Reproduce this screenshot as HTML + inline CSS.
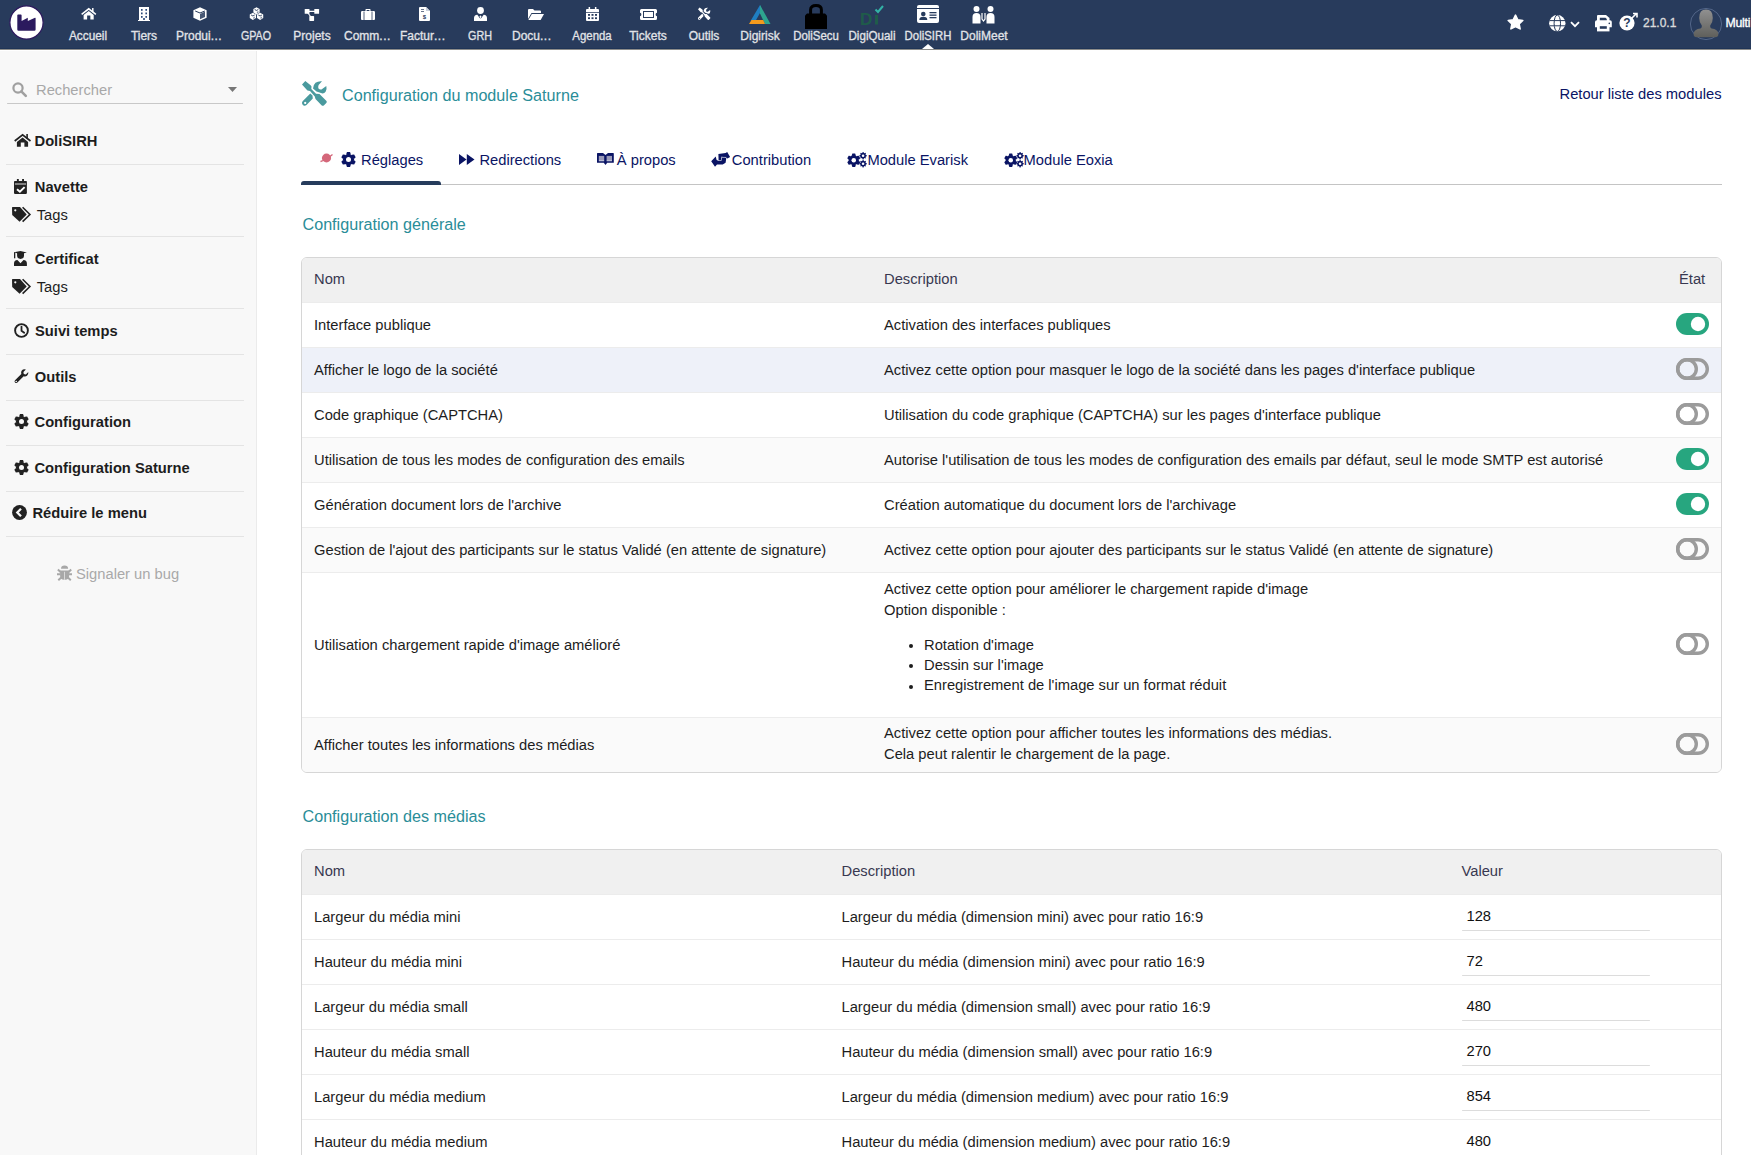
<!DOCTYPE html><html><head><meta charset="utf-8"><title>Configuration du module Saturne</title>
<style>
html,body{margin:0;padding:0}
body{width:1751px;height:1155px;overflow:hidden;position:relative;background:#fff;font-family:"Liberation Sans",sans-serif;}
.a{position:absolute;white-space:nowrap;line-height:1}
svg.a{overflow:visible}
</style></head><body>
<div class="a" style="left:0px;top:0px;width:1751px;height:48px;background:#283b5c;"></div>
<div class="a" style="left:0px;top:48px;width:1751px;height:1px;background:#1f3456;"></div>
<div class="a" style="left:0px;top:49px;width:1751px;height:1px;background:#8c8c8a;"></div>
<svg class="a" style="left:9px;top:5px;" width="35" height="35" viewBox="0 0 35 35"><circle cx="17.5" cy="17.5" r="16.6" fill="#fff" stroke="#2e1a5e" stroke-width="1.2"/><path d="M8.3 10.3 Q8.3 9.5 9.1 9.5 H11.8 Q12.6 9.5 12.6 10.3 V15.9 L18.8 12.8 V15.9 L26 12.8 Q26.6 12.6 26.6 13.3 V24.5 Q26.6 25.7 25.4 25.7 H9.5 Q8.3 25.7 8.3 24.5 Z" fill="#2b1a5e"/></svg>
<div class="a" style="left:60px;width:56px;text-align:center;top:29.74px;font-size:12px;color:#e2e4e8;-webkit-text-stroke:0.3px #e2e4e8;transform:scaleX(0.987)">Accueil</div>
<div class="a" style="left:116px;width:56px;text-align:center;top:29.74px;font-size:12px;color:#e2e4e8;-webkit-text-stroke:0.3px #e2e4e8;transform:scaleX(1)">Tiers</div>
<div class="a" style="left:176px;top:29.74px;font-size:12px;color:#e2e4e8;-webkit-text-stroke:0.3px #e2e4e8;">Produi<span style="letter-spacing:0.5px">...</span></div>
<div class="a" style="left:228px;width:56px;text-align:center;top:29.74px;font-size:12px;color:#e2e4e8;-webkit-text-stroke:0.3px #e2e4e8;transform:scaleX(0.89)">GPAO</div>
<div class="a" style="left:284px;width:56px;text-align:center;top:29.74px;font-size:12px;color:#e2e4e8;-webkit-text-stroke:0.3px #e2e4e8;transform:scaleX(1)">Projets</div>
<div class="a" style="left:344px;top:29.74px;font-size:12px;color:#e2e4e8;-webkit-text-stroke:0.3px #e2e4e8;">Comm<span style="letter-spacing:0.5px">...</span></div>
<div class="a" style="left:400px;top:29.74px;font-size:12px;color:#e2e4e8;-webkit-text-stroke:0.3px #e2e4e8;">Factur<span style="letter-spacing:0.5px">...</span></div>
<div class="a" style="left:452px;width:56px;text-align:center;top:29.74px;font-size:12px;color:#e2e4e8;-webkit-text-stroke:0.3px #e2e4e8;transform:scaleX(0.9)">GRH</div>
<div class="a" style="left:512px;top:29.74px;font-size:12px;color:#e2e4e8;-webkit-text-stroke:0.3px #e2e4e8;">Docu<span style="letter-spacing:0.5px">...</span></div>
<div class="a" style="left:564px;width:56px;text-align:center;top:29.74px;font-size:12px;color:#e2e4e8;-webkit-text-stroke:0.3px #e2e4e8;transform:scaleX(0.952)">Agenda</div>
<div class="a" style="left:620px;width:56px;text-align:center;top:29.74px;font-size:12px;color:#e2e4e8;-webkit-text-stroke:0.3px #e2e4e8;transform:scaleX(1)">Tickets</div>
<div class="a" style="left:676px;width:56px;text-align:center;top:29.74px;font-size:12px;color:#e2e4e8;-webkit-text-stroke:0.3px #e2e4e8;transform:scaleX(1)">Outils</div>
<div class="a" style="left:732px;width:56px;text-align:center;top:29.74px;font-size:12px;color:#e2e4e8;-webkit-text-stroke:0.3px #e2e4e8;transform:scaleX(1)">Digirisk</div>
<div class="a" style="left:788px;width:56px;text-align:center;top:29.74px;font-size:12px;color:#e2e4e8;-webkit-text-stroke:0.3px #e2e4e8;transform:scaleX(0.95)">DoliSecu</div>
<div class="a" style="left:844px;width:56px;text-align:center;top:29.74px;font-size:12px;color:#e2e4e8;-webkit-text-stroke:0.3px #e2e4e8;transform:scaleX(0.965)">DigiQuali</div>
<div class="a" style="left:900px;width:56px;text-align:center;top:29.74px;font-size:12px;color:#e2e4e8;-webkit-text-stroke:0.3px #e2e4e8;transform:scaleX(0.948)">DoliSIRH</div>
<div class="a" style="left:956px;width:56px;text-align:center;top:29.74px;font-size:12px;color:#e2e4e8;-webkit-text-stroke:0.3px #e2e4e8;transform:scaleX(1)">DoliMeet</div>
<svg class="a" style="left:80.5px;top:7.5px;" width="16" height="13" viewBox="0 0 16 13"><g transform="scale(0.9)"><path d="M0.7 7 L8.6 0.9 L16.5 7" fill="none" stroke="#fff" stroke-width="1.7" stroke-linejoin="miter"/><rect x="12.3" y="0" width="1.6" height="4.6" fill="#fff"/><path d="M2.9 7.9 L8.6 3.4 L14.1 7.9 V12.7 H10.4 V8.4 H6.8 V12.7 H2.9 Z" fill="#fff"/></g></svg>
<svg class="a" style="left:138px;top:7px;" width="12" height="14" viewBox="0 0 12 14"><path d="M1 0 H11 V13 H12 V14 H0 V13 H1 Z" fill="#fff"/><g fill="#2b4a7a"><rect x="3" y="2" width="1.6" height="1.8"/><rect x="7.4" y="2" width="1.6" height="1.8"/><rect x="3" y="5.5" width="1.6" height="1.8"/><rect x="7.4" y="5.5" width="1.6" height="1.8"/><rect x="3" y="9" width="1.6" height="1.8"/><rect x="7.4" y="9" width="1.6" height="1.8"/><rect x="5.2" y="11" width="1.6" height="2"/></g></svg>
<svg class="a" style="left:193px;top:7px;" width="14" height="14" viewBox="0 0 14 14"><path d="M7 0.3 L13.6 3.2 V10.8 L7 13.7 L0.4 10.8 V3.2 Z" fill="#fff"/><path d="M7 7 L12 4.6 V10 L7 12.2 Z" fill="#283b5c" opacity="0.85"/><path d="M2.2 4 L7 6 L11.8 4" stroke="#283b5c" stroke-width="1" fill="none"/></svg>
<svg class="a" style="left:249px;top:6.5px;" width="15" height="14" viewBox="0 0 15 14"><path d="M7.50 0.20 L10.63 2.00 L10.63 5.60 L7.50 7.40 L4.37 5.60 L4.37 2.00 Z" fill="#fff"/><path d="M5.70 2.54 L7.50 3.44 L9.30 2.54" fill="none" stroke="#283b5c" stroke-width="0.9"/><path d="M7.86 4.70 L9.48 3.98 V5.78 L7.86 6.50 Z" fill="#283b5c" opacity="0.55"/><path d="M3.90 5.70 L7.03 7.50 L7.03 11.10 L3.90 12.90 L0.77 11.10 L0.77 7.50 Z" fill="#fff"/><path d="M2.10 8.04 L3.90 8.94 L5.70 8.04" fill="none" stroke="#283b5c" stroke-width="0.9"/><path d="M4.26 10.20 L5.88 9.48 V11.28 L4.26 12.00 Z" fill="#283b5c" opacity="0.55"/><path d="M11.10 5.70 L14.23 7.50 L14.23 11.10 L11.10 12.90 L7.97 11.10 L7.97 7.50 Z" fill="#fff"/><path d="M9.30 8.04 L11.10 8.94 L12.90 8.04" fill="none" stroke="#283b5c" stroke-width="0.9"/><path d="M11.46 10.20 L13.08 9.48 V11.28 L11.46 12.00 Z" fill="#283b5c" opacity="0.55"/></svg>
<svg class="a" style="left:304px;top:8px;" width="15" height="13" viewBox="0 0 15 13"><g fill="#fff"><rect x="0.7" y="1" width="4.8" height="4.8" rx="0.6"/><rect x="10.3" y="1" width="4.8" height="4.8" rx="0.6"/><rect x="5.3" y="8.1" width="4.8" height="4.8" rx="0.6"/></g><path d="M4 3.4 H11 M3.5 4.5 L7 9" stroke="#fff" stroke-width="1.1"/></svg>
<svg class="a" style="left:361px;top:9px;" width="14" height="11" viewBox="0 0 14 11"><path d="M4.5 2 V0.6 Q4.5 0 5.1 0 H8.9 Q9.5 0 9.5 0.6 V2 H12.8 Q14 2 14 3.2 V10 Q14 11 13 11 H1 Q0 11 0 10 V3.2 Q0 2 1.2 2 Z M5.6 2 H8.4 V1 H5.6 Z" fill="#fff" fill-rule="evenodd"/><path d="M3 2.5 V11 M11 2.5 V11" stroke="#283b5c" stroke-width="0.8"/></svg>
<svg class="a" style="left:419px;top:7px;" width="11" height="14" viewBox="0 0 11 14"><path d="M0 1 Q0 0 1 0 H7 L11 4 V13 Q11 14 10 14 H1 Q0 14 0 13 Z" fill="#fff"/><path d="M7 0 V4 H11" fill="#c8cfdc"/><path d="M2 2.5 H5 M2 4.5 H5" stroke="#283b5c" stroke-width="0.7"/><text x="5.5" y="11.5" font-size="6" text-anchor="middle" fill="#283b5c" font-family="Liberation Sans" font-weight="700">$</text></svg>
<svg class="a" style="left:474px;top:7px;" width="13" height="14" viewBox="0 0 13 14"><circle cx="6.5" cy="3.5" r="3.4" fill="#fff"/><path d="M0 14 V11 Q0 8 3.3 7.8 L6.5 12 L9.7 7.8 Q13 8 13 11 V14 Z" fill="#fff"/><path d="M6.5 8.2 L5.8 9.3 L6.5 13 L7.2 9.3 Z" fill="#fff"/></svg>
<svg class="a" style="left:528px;top:9px;" width="16" height="11" viewBox="0 0 16 11"><path d="M0 1 Q0 0 1 0 H5 L6.5 1.5 H12 Q13 1.5 13 2.5 V4 H3.5 L0 10 Z" fill="#fff"/><path d="M3.8 5 H16 L12.6 11 H0.4 Z" fill="#fff"/></svg>
<svg class="a" style="left:586px;top:7px;" width="13" height="14" viewBox="0 0 13 14"><path d="M0 3 Q0 2 1 2 H12 Q13 2 13 3 V5 H0 Z" fill="#fff"/><rect x="2.6" y="0" width="1.5" height="3" fill="#fff"/><rect x="8.9" y="0" width="1.5" height="3" fill="#fff"/><path d="M0 5.8 H13 V13 Q13 14 12 14 H1 Q0 14 0 13 Z" fill="#fff"/><g fill="#283b5c"><rect x="2" y="7" width="2" height="1.8"/><rect x="5.5" y="7" width="2" height="1.8"/><rect x="9" y="7" width="2" height="1.8"/><rect x="2" y="10.3" width="2" height="1.8"/><rect x="5.5" y="10.3" width="2" height="1.8"/><rect x="9" y="10.3" width="2" height="1.8"/></g></svg>
<svg class="a" style="left:640px;top:9px;" width="17" height="11" viewBox="0 0 17 11"><path d="M1.5 0 H15.5 Q17 0 17 1.5 V3.8 Q15.6 3.8 15.6 5.5 Q15.6 7.2 17 7.2 V9.5 Q17 11 15.5 11 H1.5 Q0 11 0 9.5 V7.2 Q1.4 7.2 1.4 5.5 Q1.4 3.8 0 3.8 V1.5 Q0 0 1.5 0 Z" fill="#fff"/><rect x="3.5" y="2.5" width="10" height="6" fill="none" stroke="#283b5c" stroke-width="1"/></svg>
<svg class="a" style="left:696px;top:5px;" width="17" height="17" viewBox="0 0 17 17"><g transform="scale(0.5)"><path d="M4 8.5 L7.3 5 L12.6 9.2 L13.5 10.5 L13.3 13 L18 17.8 L21.5 18 L28.5 25 Q29.2 26 28.3 27 L25.8 29.5 Q24.6 30.3 23.5 29.3 L17.5 23 L16.8 20.5 L12 15 L9.5 14.5 L8.5 13.5 Z" fill="#fff"/><path d="M12.3 17.5 L14.5 19.5 L14.8 22.5 L8.5 29 Q7 30.2 5.5 29.5 L4.3 28.3 Q3.5 26.8 4.6 25.2 Z M7.2 25.8 A1.1 1.1 0 1 0 7.21 25.8 Z" fill="#fff" fill-rule="evenodd"/><path d="M15 12.5 Q15.5 8.5 17.5 6.8 Q20 5 24 5.3 L20.6 9 Q19.8 11 20.5 12.5 Q21.8 14 23.5 13.4 L28.3 10 Q29.2 13.5 27.6 15.8 Q26.5 17.6 24.5 17.6 L21.5 16.6 L18.5 15.6 Z" fill="#fff"/></g></svg>
<svg class="a" style="left:749px;top:5px;" width="22" height="20" viewBox="0 0 22 20"><path d="M11 0 L1.5 16 H6.5 L11 8 L13 4.5 Z" fill="#1f7ec2"/><path d="M11 0 L21.5 19 H16 L11 8.5 Z" fill="#2ea58f"/><path d="M0 19 L2.5 15 H14.2 L16 19 Z" fill="#f39a1d"/></svg>
<svg class="a" style="left:804px;top:3px;" width="24" height="26" viewBox="0 0 24 26"><path d="M6.6 11.5 V6.8 Q6.6 2.5 12 2.5 Q17.4 2.5 17.4 6.8 V11.5" fill="none" stroke="#000" stroke-width="3"/><path d="M3 10.5 H21 L23 12.5 V26 H1 V12.5 Z" fill="#000"/></svg>
<svg class="a" style="left:860px;top:4px;" width="24" height="22" viewBox="0 0 24 22"><text x="0" y="20.5" font-family="Liberation Sans" font-weight="700" font-size="17" fill="#1f5c4a">D</text><rect x="15" y="11" width="3" height="9.5" fill="#1f5c4a"/><path d="M15.5 5.5 L18 8 L23 2" fill="none" stroke="#33b3a6" stroke-width="2"/></svg>
<svg class="a" style="left:917px;top:5px;" width="22" height="18" viewBox="0 0 22 18"><rect x="0" y="0" width="22" height="18" rx="2" fill="#fff"/><rect x="0" y="3" width="22" height="1" fill="#283b5c"/><circle cx="6.3" cy="9" r="2.3" fill="#283b5c"/><path d="M2.3 15 Q2.3 11.8 6.3 11.8 Q10.3 11.8 10.3 15 Z" fill="#283b5c"/><rect x="12.5" y="7" width="7" height="1.3" fill="#283b5c"/><rect x="12.5" y="9.5" width="7" height="1.3" fill="#283b5c"/><rect x="12.5" y="12" width="7" height="1.3" fill="#283b5c"/></svg>
<svg class="a" style="left:972px;top:6px;" width="23" height="18" viewBox="0 0 23 18"><circle cx="4.5" cy="3" r="3" fill="#fff"/><circle cx="18.5" cy="3" r="3" fill="#fff"/><path d="M0.5 17.5 V11 Q0.5 7 4.5 7 Q8.5 7 8.5 11 V17.5 Z" fill="#fff"/><path d="M14.5 17.5 V11 Q14.5 7 18.5 7 Q22.5 7 22.5 11 V17.5 Z" fill="#fff"/><path d="M10 7 V13 L11.5 15 L13 13 V7" fill="none" stroke="#fff" stroke-width="1.2"/></svg>
<svg class="a" style="left:922px;top:44px;" width="12" height="5" viewBox="0 0 12 5"><path d="M0 5 L6 0 L12 5 Z" fill="#fff"/></svg>
<svg class="a" style="left:1507px;top:14px;" width="17" height="16" viewBox="0 0 17 16"><path d="M8.5 1.2 L10.8 5.9 L15.8 6.5 L12.1 10 L13.1 14.9 L8.5 12.5 L3.9 14.9 L4.9 10 L1.2 6.5 L6.2 5.9 Z" fill="#fff" stroke="#fff" stroke-width="1.6" stroke-linejoin="round"/></svg>
<svg class="a" style="left:1549px;top:14.5px;" width="17" height="17" viewBox="0 0 17 17"><circle cx="8.3" cy="8.3" r="8.2" fill="#fff"/><path d="M0.5 5.6 H16 M0.5 10.8 H16" stroke="#283b5c" stroke-width="1"/><ellipse cx="8.3" cy="8.3" rx="3.2" ry="8.2" fill="none" stroke="#283b5c" stroke-width="1"/></svg>
<svg class="a" style="left:1570px;top:21px;" width="10" height="7" viewBox="0 0 10 7"><path d="M1 1.2 L5 5.2 L9 1.2" fill="none" stroke="#fff" stroke-width="1.8"/></svg>
<svg class="a" style="left:1595px;top:14.8px;" width="17" height="17" viewBox="0 0 17 17"><path d="M2 1 Q2 0 3 0 H11 L14.5 3 V6 H2 Z" fill="#fff"/><path d="M4.8 2.7 H10.5 L11.8 4 V6.5 H4.8 Z" fill="#283b5c"/><path d="M0 7 Q0 5.2 1.8 5.2 H15 Q16.8 5.2 16.8 7 V12.2 H0 Z" fill="#fff"/><circle cx="14.3" cy="8.4" r="0.8" fill="#283b5c"/><path d="M2 9.7 H14.5 V16.4 H2 Z" fill="#fff"/><rect x="4.8" y="11.2" width="7" height="2.6" fill="#283b5c"/></svg>
<svg class="a" style="left:1619px;top:13px;" width="19" height="18" viewBox="0 0 19 18"><circle cx="8" cy="10" r="7.6" fill="#fff"/><text x="8" y="14.3" text-anchor="middle" font-family="Liberation Sans" font-weight="700" font-size="12" fill="#283b5c">?</text><path d="M12.5 5.5 L17.5 0.5 M14 0.5 H18 V4.5" fill="none" stroke="#fff" stroke-width="1.6"/></svg>
<div class="a" style="left:1643.00px;top:17.34px;font-size:12px;color:#dadada;font-weight:400;-webkit-text-stroke:0.35px #dadada;">21.0.1</div>
<svg class="a" style="left:1690px;top:8px;" width="32" height="32" viewBox="0 0 32 32"><defs><linearGradient id="hg" x1="0" y1="0" x2="0" y2="1"><stop offset="0" stop-color="#909090"/><stop offset="1" stop-color="#5f5f5b"/></linearGradient></defs><circle cx="16" cy="16" r="15.6" fill="none" stroke="#5d7093" stroke-width="0.8"/><path d="M16 1.6 Q22.8 1.6 22.8 10 Q22.8 14.5 20.2 17.5 Q19.6 19.6 21.5 20.6 Q28 21.3 28.4 26 Q28.4 29.3 25 29.3 H7 Q3.6 29.3 3.6 26 Q4 21.3 10.5 20.6 Q12.4 19.6 11.8 17.5 Q9.2 14.5 9.2 10 Q9.2 1.6 16 1.6 Z" fill="url(#hg)"/></svg>
<div class="a" style="left:1725.50px;top:17.09px;font-size:12.3px;color:#fff;font-weight:400;-webkit-text-stroke:0.35px #fff;letter-spacing:-0.25px;">Multi</div>
<div class="a" style="left:0px;top:50px;width:257px;height:1px;background:#fff;"></div>
<div class="a" style="left:0px;top:51px;width:256px;height:1104px;background:#f8f8f8;"></div>
<div class="a" style="left:256px;top:51px;width:1px;height:1104px;background:#ebebeb;"></div>
<svg class="a" style="left:12px;top:82px;" width="15" height="15" viewBox="0 0 15 15"><circle cx="6" cy="6" r="4.6" fill="none" stroke="#a0a0a0" stroke-width="2.2"/><path d="M9.3 9.3 L13.8 13.8" stroke="#a0a0a0" stroke-width="2.6" stroke-linecap="round"/></svg>
<div class="a" style="left:36.00px;top:83.24px;font-size:14.72px;color:#a8a8a8;font-weight:400;">Rechercher</div>
<svg class="a" style="left:228px;top:87px;" width="9" height="5" viewBox="0 0 9 5"><path d="M0 0 H9 L4.5 5 Z" fill="#777"/></svg>
<div class="a" style="left:7px;top:103px;width:236px;height:1px;background:#c8c8c8;border-radius:1px"></div>
<div class="a" style="left:34.50px;top:134.14px;font-size:14.72px;color:#1d1d1d;font-weight:700;">DoliSIRH</div>
<svg class="a" style="left:14px;top:134px;" width="17" height="13" viewBox="0 0 17 13"><path d="M0.7 7 L8.6 0.9 L16.5 7" fill="none" stroke="#222" stroke-width="1.7" stroke-linejoin="miter"/><rect x="12.3" y="0" width="1.6" height="4.6" fill="#222"/><path d="M2.9 7.9 L8.6 3.4 L14.1 7.9 V12.7 H10.4 V8.4 H6.8 V12.7 H2.9 Z" fill="#222"/></svg>
<div class="a" style="left:6px;top:164px;width:238px;height:1px;background:#e4e4e4;"></div>
<div class="a" style="left:34.80px;top:179.84px;font-size:14.72px;color:#1d1d1d;font-weight:700;">Navette</div>
<svg class="a" style="left:14px;top:179px;" width="13" height="15" viewBox="0 0 13 15"><rect x="0" y="1.9" width="12.9" height="13" rx="0.8" fill="#222"/><rect x="2.9" y="0" width="1.9" height="2.5" fill="#222"/><rect x="8.1" y="0" width="1.9" height="2.5" fill="#222"/><rect x="0.9" y="4" width="11.1" height="2" fill="#808080"/><path d="M3 10.2 L5.9 12.7 L10.6 8.1" fill="none" stroke="#fff" stroke-width="1.9"/></svg>
<div class="a" style="left:36.75px;top:208.04px;font-size:14.72px;color:#1d1d1d;font-weight:400;">Tags</div>
<svg class="a" style="left:12px;top:207px;" width="19" height="15" viewBox="0 0 19 15"><path d="M0 0.6 Q0 0 0.6 0 H8 L14.7 7.5 L7.6 14.8 L0.2 7.9 Z" fill="#222"/><circle cx="3.3" cy="3.3" r="1.1" fill="#f8f8f8"/><path d="M10.6 0.3 L17.9 7.5 L10.6 14.6" fill="none" stroke="#222" stroke-width="1.6"/></svg>
<div class="a" style="left:6px;top:236px;width:238px;height:1px;background:#e4e4e4;"></div>
<div class="a" style="left:34.80px;top:252.04px;font-size:14.72px;color:#1d1d1d;font-weight:700;">Certificat</div>
<svg class="a" style="left:14px;top:251px;" width="13" height="15" viewBox="0 0 13 15"><path d="M0 1.3 L6.5 0 L12.9 1.4 L10 2.3 H3 Z" fill="#222"/><path d="M3.1 1.8 H10 V4.6 Q10 7.9 6.5 7.9 Q3.1 7.9 3.1 4.6 Z" fill="#222"/><rect x="0" y="1.2" width="1.3" height="6.1" fill="#222"/><path d="M0 15 V12.5 Q0 9.3 3.4 9.1 L6.5 12.3 L9.5 9.1 Q12.9 9.3 12.9 12.5 V15 Z" fill="#222"/></svg>
<div class="a" style="left:36.75px;top:279.84px;font-size:14.72px;color:#1d1d1d;font-weight:400;">Tags</div>
<svg class="a" style="left:12px;top:279px;" width="19" height="15" viewBox="0 0 19 15"><path d="M0 0.6 Q0 0 0.6 0 H8 L14.7 7.5 L7.6 14.8 L0.2 7.9 Z" fill="#222"/><circle cx="3.3" cy="3.3" r="1.1" fill="#f8f8f8"/><path d="M10.6 0.3 L17.9 7.5 L10.6 14.6" fill="none" stroke="#222" stroke-width="1.6"/></svg>
<div class="a" style="left:6px;top:308px;width:238px;height:1px;background:#e4e4e4;"></div>
<div class="a" style="left:35.00px;top:323.94px;font-size:14.72px;color:#1d1d1d;font-weight:700;">Suivi temps</div>
<svg class="a" style="left:14px;top:323px;" width="15" height="15" viewBox="0 0 15 15"><circle cx="7.5" cy="7.5" r="6.4" fill="none" stroke="#222" stroke-width="1.9"/><path d="M7.5 3.6 V7.8 L10.2 9.8" fill="none" stroke="#222" stroke-width="1.8" stroke-linecap="round"/></svg>
<div class="a" style="left:6px;top:354px;width:238px;height:1px;background:#e4e4e4;"></div>
<div class="a" style="left:34.80px;top:369.94px;font-size:14.72px;color:#1d1d1d;font-weight:700;">Outils</div>
<svg class="a" style="left:14px;top:369px;" width="15" height="15" viewBox="0 0 15 15"><path d="M14.3 3 L11.8 5.4 L9.8 5 L9.4 3 L11.9 0.6 Q9.3 -0.2 7.8 1.6 Q6.7 3 7.3 4.9 L1 11.2 Q0 12.4 1 13.6 Q2.2 14.6 3.4 13.6 L9.7 7.3 Q11.6 7.9 13 6.8 Q14.6 5.4 14.3 3 Z" fill="#222"/><circle cx="2.2" cy="12.5" r="0.8" fill="#f8f8f8"/></svg>
<div class="a" style="left:6px;top:400px;width:238px;height:1px;background:#e4e4e4;"></div>
<div class="a" style="left:34.50px;top:415.04px;font-size:14.72px;color:#1d1d1d;font-weight:700;">Configuration</div>
<svg class="a" style="left:14px;top:414px;" width="15" height="15" viewBox="0 0 15 15"><path d="M5.20 2.20 L5.95 0.10 L9.05 0.10 L9.80 2.20 L1.76 6.84 L0.32 5.14 L1.87 2.46 L4.06 2.86 L4.06 12.14 L1.87 12.54 L0.32 9.86 L1.76 8.16 L9.80 12.80 L9.05 14.90 L5.95 14.90 L5.20 12.80 L13.24 8.16 L14.68 9.86 L13.13 12.54 L10.94 12.14 L10.94 2.86 L13.13 2.46 L14.68 5.14 L13.24 6.84 Z" fill="#222"/><circle cx="7.5" cy="7.5" r="5.6" fill="#222"/><circle cx="7.5" cy="7.5" r="2.5" fill="#f8f8f8"/></svg>
<div class="a" style="left:6px;top:445px;width:238px;height:1px;background:#e4e4e4;"></div>
<div class="a" style="left:34.40px;top:461.04px;font-size:14.72px;color:#1d1d1d;font-weight:700;">Configuration Saturne</div>
<svg class="a" style="left:14px;top:460px;" width="15" height="15" viewBox="0 0 15 15"><path d="M5.20 2.20 L5.95 0.10 L9.05 0.10 L9.80 2.20 L1.76 6.84 L0.32 5.14 L1.87 2.46 L4.06 2.86 L4.06 12.14 L1.87 12.54 L0.32 9.86 L1.76 8.16 L9.80 12.80 L9.05 14.90 L5.95 14.90 L5.20 12.80 L13.24 8.16 L14.68 9.86 L13.13 12.54 L10.94 12.14 L10.94 2.86 L13.13 2.46 L14.68 5.14 L13.24 6.84 Z" fill="#222"/><circle cx="7.5" cy="7.5" r="5.6" fill="#222"/><circle cx="7.5" cy="7.5" r="2.5" fill="#f8f8f8"/></svg>
<div class="a" style="left:6px;top:491px;width:238px;height:1px;background:#e4e4e4;"></div>
<div class="a" style="left:32.40px;top:506.04px;font-size:14.72px;color:#1d1d1d;font-weight:700;">Réduire le menu</div>
<svg class="a" style="left:12px;top:505px;" width="15" height="15" viewBox="0 0 15 15"><circle cx="7.5" cy="7.5" r="7.4" fill="#222"/><path d="M9 3.8 L5.3 7.5 L9 11.2" fill="none" stroke="#f8f8f8" stroke-width="2.3"/></svg>
<div class="a" style="left:6px;top:536px;width:238px;height:1px;background:#e4e4e4;"></div>
<div class="a" style="left:76.00px;top:566.84px;font-size:14.72px;color:#a9a9a9;font-weight:400;">Signaler un bug</div>
<svg class="a" style="left:52px;top:560px;" width="26" height="24" viewBox="0 0 26 24"><path d="M9 8.8 Q9 5.6 12.55 5.6 Q16.1 5.6 16.1 8.8 Z" fill="#a8a8a8"/><path d="M8.1 10.6 H17.1 V16 Q17.1 19.8 13.2 19.8 H12 Q8.1 19.8 8.1 16 Z" fill="#a8a8a8"/><rect x="12.25" y="11.8" width="0.75" height="8" fill="#eaeaea"/><path d="M5.9 9.5 L8.8 12.2 M19.2 9.5 L16.4 12.2 M5 14.3 H8.5 M16.7 14.3 H20 M6.3 20.3 L9.2 17.6 M18.8 20.3 L15.9 17.6" stroke="#a8a8a8" stroke-width="2"/></svg>
<svg class="a" style="left:298px;top:76px;" width="34" height="34" viewBox="0 0 34 34"><path d="M4 8.5 L7.3 5 L12.6 9.2 L13.5 10.5 L13.3 13 L18 17.8 L21.5 18 L28.5 25 Q29.2 26 28.3 27 L25.8 29.5 Q24.6 30.3 23.5 29.3 L17.5 23 L16.8 20.5 L12 15 L9.5 14.5 L8.5 13.5 Z" fill="#4a9a9e"/><path d="M12.3 17.5 L14.5 19.5 L14.8 22.5 L8.5 29 Q7 30.2 5.5 29.5 L4.3 28.3 Q3.5 26.8 4.6 25.2 Z M7.2 25.8 A1.1 1.1 0 1 0 7.21 25.8 Z" fill="#4a9a9e" fill-rule="evenodd"/><path d="M15 12.5 Q15.5 8.5 17.5 6.8 Q20 5 24 5.3 L20.6 9 Q19.8 11 20.5 12.5 Q21.8 14 23.5 13.4 L28.3 10 Q29.2 13.5 27.6 15.8 Q26.5 17.6 24.5 17.6 L21.5 16.6 L18.5 15.6 Z" fill="#4a9a9e"/></svg>
<div class="a" style="left:342.00px;top:87.43px;font-size:16.15px;color:#2a8d98;font-weight:400;">Configuration du module Saturne</div>
<div class="a" style="right:29.5px;top:86.54px;font-size:14.72px;color:#0a1464">Retour liste des modules</div>
<svg class="a" style="left:320px;top:153px;" width="13" height="10" viewBox="0 0 13 10"><ellipse cx="6.5" cy="5" rx="4.6" ry="4.4" fill="#d4677a"/><path d="M0.5 8.5 Q6 7 12.5 1.5" fill="none" stroke="#d4677a" stroke-width="1.3"/></svg>
<svg class="a" style="left:341px;top:152px;" width="15" height="15" viewBox="0 0 15 15"><path d="M5.20 2.20 L5.95 0.10 L9.05 0.10 L9.80 2.20 L1.76 6.84 L0.32 5.14 L1.87 2.46 L4.06 2.86 L4.06 12.14 L1.87 12.54 L0.32 9.86 L1.76 8.16 L9.80 12.80 L9.05 14.90 L5.95 14.90 L5.20 12.80 L13.24 8.16 L14.68 9.86 L13.13 12.54 L10.94 12.14 L10.94 2.86 L13.13 2.46 L14.68 5.14 L13.24 6.84 Z" fill="#0a1464"/><circle cx="7.5" cy="7.5" r="5.6" fill="#0a1464"/><circle cx="7.5" cy="7.5" r="2.5" fill="#fff"/></svg>
<div class="a" style="left:361.00px;top:153.24px;font-size:14.72px;color:#0a1464;font-weight:400;">Réglages</div>
<svg class="a" style="left:459px;top:154px;" width="16" height="11" viewBox="0 0 16 11"><path d="M0 0 L7.5 5.5 L0 11 Z M7.8 0 L15.5 5.5 L7.8 11 Z" fill="#0a1464"/></svg>
<div class="a" style="left:479.40px;top:153.24px;font-size:14.72px;color:#0a1464;font-weight:400;">Redirections</div>
<svg class="a" style="left:597px;top:153px;" width="17" height="13" viewBox="0 0 17 13"><path d="M0 0.6 Q0 0 0.6 0 H6 L8.5 2 L11 0 H16.2 Q16.8 0 16.8 0.6 V9.7 H10.2 L8.5 12.1 L6.8 9.7 H0 Z" fill="#0a1464"/><rect x="1.8" y="2.9" width="5.4" height="4.2" fill="#9a9ab8"/><rect x="1.8" y="7.3" width="5.4" height="0.9" fill="#fff"/><rect x="9.6" y="2.9" width="5.4" height="4.2" fill="#9a9ab8"/><rect x="9.6" y="7.3" width="5.4" height="0.9" fill="#fff"/></svg>
<div class="a" style="left:616.80px;top:153.24px;font-size:14.72px;color:#0a1464;font-weight:400;">À propos</div>
<svg class="a" style="left:706px;top:146px;" width="26" height="22" viewBox="0 0 26 22"><path d="M12.4 8.1 L19.6 7 L21.2 5.9 L24.1 11 L21.4 12.6 L19.8 11.2 L15.3 10.8 L15.3 14 L12.6 14.4 Z" fill="#0a1464"/><path d="M5.2 15.3 L9.7 10.4 L10.6 14 L12.8 14.9 L15.6 14.5 L16 12 L20.3 11.9 L19.6 16.8 L16.7 18.5 L11 18.6 L9 20.7 Z" fill="#0a1464"/><rect x="15.3" y="10.9" width="4.3" height="1.1" fill="#8f93b8"/></svg>
<div class="a" style="left:731.80px;top:153.24px;font-size:14.72px;color:#0a1464;font-weight:400;">Contribution</div>
<svg class="a" style="left:847px;top:152px;" width="19" height="15" viewBox="0 0 19 15"><g transform="translate(0,1.5) scale(0.9)"><path d="M5.20 2.20 L5.95 0.10 L9.05 0.10 L9.80 2.20 L1.76 6.84 L0.32 5.14 L1.87 2.46 L4.06 2.86 L4.06 12.14 L1.87 12.54 L0.32 9.86 L1.76 8.16 L9.80 12.80 L9.05 14.90 L5.95 14.90 L5.20 12.80 L13.24 8.16 L14.68 9.86 L13.13 12.54 L10.94 12.14 L10.94 2.86 L13.13 2.46 L14.68 5.14 L13.24 6.84 Z" fill="#0a1464"/><circle cx="7.5" cy="7.5" r="5.6" fill="#0a1464"/><circle cx="7.5" cy="7.5" r="2.5" fill="#fff"/></g><g transform="translate(13,0)"><path d="M2.6 0 H3.6 L3.8 0.9 L4.6 1.3 L5.3 0.8 L6 1.5 L5.5 2.2 L5.9 3 L6.8 3.2 V4.2 L5.9 4.4 L5.5 5.2 L6 5.9 L5.3 6.6 L4.6 6.1 L3.8 6.5 L3.6 7.4 H2.6 L2.4 6.5 L1.6 6.1 L0.9 6.6 L0.2 5.9 L0.7 5.2 L0.3 4.4 L-0.6 4.2 V3.2 L0.3 3 L0.7 2.2 L0.2 1.5 L0.9 0.8 L1.6 1.3 L2.4 0.9 Z" fill="#0a1464"/><circle cx="3.1" cy="3.7" r="1.3" fill="#fff"/></g><g transform="translate(13,8)"><path d="M2.6 0 H3.6 L3.8 0.9 L4.6 1.3 L5.3 0.8 L6 1.5 L5.5 2.2 L5.9 3 L6.8 3.2 V4.2 L5.9 4.4 L5.5 5.2 L6 5.9 L5.3 6.6 L4.6 6.1 L3.8 6.5 L3.6 7.4 H2.6 L2.4 6.5 L1.6 6.1 L0.9 6.6 L0.2 5.9 L0.7 5.2 L0.3 4.4 L-0.6 4.2 V3.2 L0.3 3 L0.7 2.2 L0.2 1.5 L0.9 0.8 L1.6 1.3 L2.4 0.9 Z" fill="#0a1464"/><circle cx="3.1" cy="3.7" r="1.3" fill="#fff"/></g></svg>
<div class="a" style="left:867.40px;top:153.24px;font-size:14.72px;color:#0a1464;font-weight:400;">Module Evarisk</div>
<svg class="a" style="left:1003.5px;top:152px;" width="19" height="15" viewBox="0 0 19 15"><g transform="translate(0,1.5) scale(0.9)"><path d="M5.20 2.20 L5.95 0.10 L9.05 0.10 L9.80 2.20 L1.76 6.84 L0.32 5.14 L1.87 2.46 L4.06 2.86 L4.06 12.14 L1.87 12.54 L0.32 9.86 L1.76 8.16 L9.80 12.80 L9.05 14.90 L5.95 14.90 L5.20 12.80 L13.24 8.16 L14.68 9.86 L13.13 12.54 L10.94 12.14 L10.94 2.86 L13.13 2.46 L14.68 5.14 L13.24 6.84 Z" fill="#0a1464"/><circle cx="7.5" cy="7.5" r="5.6" fill="#0a1464"/><circle cx="7.5" cy="7.5" r="2.5" fill="#fff"/></g><g transform="translate(13,0)"><path d="M2.6 0 H3.6 L3.8 0.9 L4.6 1.3 L5.3 0.8 L6 1.5 L5.5 2.2 L5.9 3 L6.8 3.2 V4.2 L5.9 4.4 L5.5 5.2 L6 5.9 L5.3 6.6 L4.6 6.1 L3.8 6.5 L3.6 7.4 H2.6 L2.4 6.5 L1.6 6.1 L0.9 6.6 L0.2 5.9 L0.7 5.2 L0.3 4.4 L-0.6 4.2 V3.2 L0.3 3 L0.7 2.2 L0.2 1.5 L0.9 0.8 L1.6 1.3 L2.4 0.9 Z" fill="#0a1464"/><circle cx="3.1" cy="3.7" r="1.3" fill="#fff"/></g><g transform="translate(13,8)"><path d="M2.6 0 H3.6 L3.8 0.9 L4.6 1.3 L5.3 0.8 L6 1.5 L5.5 2.2 L5.9 3 L6.8 3.2 V4.2 L5.9 4.4 L5.5 5.2 L6 5.9 L5.3 6.6 L4.6 6.1 L3.8 6.5 L3.6 7.4 H2.6 L2.4 6.5 L1.6 6.1 L0.9 6.6 L0.2 5.9 L0.7 5.2 L0.3 4.4 L-0.6 4.2 V3.2 L0.3 3 L0.7 2.2 L0.2 1.5 L0.9 0.8 L1.6 1.3 L2.4 0.9 Z" fill="#0a1464"/><circle cx="3.1" cy="3.7" r="1.3" fill="#fff"/></g></svg>
<div class="a" style="left:1023.60px;top:153.24px;font-size:14.72px;color:#0a1464;font-weight:400;">Module Eoxia</div>
<div class="a" style="left:301px;top:184px;width:1421px;height:1px;background:#c4c4c4;"></div>
<div class="a" style="left:301px;top:181px;width:140px;height:4px;background:#263c5c;border-radius:3px 3px 0 0"></div>
<div class="a" style="left:302.50px;top:216.03px;font-size:16.15px;color:#2a8d98;font-weight:400;">Configuration générale</div>
<div class="a" style="left:301px;top:257px;width:1419px;height:514px;border:1px solid #d6d6d6;border-radius:6px;overflow:hidden;background:#fff">
<div style="position:absolute;left:0;top:0;width:1419px;height:44px;background:#f0f0f0"></div>
<div style="position:absolute;left:0;top:44px;width:1419px;height:45px;background:#fff;border-top:1px solid #ececec;box-sizing:border-box"></div>
<div style="position:absolute;left:0;top:89px;width:1419px;height:45px;background:#eef1f9;border-top:1px solid #ececec;box-sizing:border-box"></div>
<div style="position:absolute;left:0;top:134px;width:1419px;height:45px;background:#fff;border-top:1px solid #ececec;box-sizing:border-box"></div>
<div style="position:absolute;left:0;top:179px;width:1419px;height:45px;background:#fafafa;border-top:1px solid #ececec;box-sizing:border-box"></div>
<div style="position:absolute;left:0;top:224px;width:1419px;height:45px;background:#fff;border-top:1px solid #ececec;box-sizing:border-box"></div>
<div style="position:absolute;left:0;top:269px;width:1419px;height:45px;background:#fafafa;border-top:1px solid #ececec;box-sizing:border-box"></div>
<div style="position:absolute;left:0;top:314px;width:1419px;height:145px;background:#fff;border-top:1px solid #ececec;box-sizing:border-box"></div>
<div style="position:absolute;left:0;top:459px;width:1419px;height:55px;background:#fafafa;border-top:1px solid #ececec;box-sizing:border-box"></div>
</div>
<div class="a" style="left:314.00px;top:272.04px;font-size:14.72px;color:#383850;font-weight:400;">Nom</div>
<div class="a" style="left:884.00px;top:272.04px;font-size:14.72px;color:#383850;font-weight:400;">Description</div>
<div class="a" style="left:1679.00px;top:272.04px;font-size:14.72px;color:#383850;font-weight:400;">État</div>
<div class="a" style="left:314.00px;top:317.84px;font-size:14.72px;color:#1d1d1d;font-weight:400;">Interface publique</div>
<div class="a" style="left:884.00px;top:317.84px;font-size:14.72px;color:#1d1d1d;font-weight:400;">Activation des interfaces publiques</div>
<svg class="a" style="left:1676px;top:313px;" width="33" height="22" viewBox="0 0 33 22"><rect x="0" y="0" width="33" height="22" rx="11" fill="#27a67f"/><circle cx="22" cy="11" r="7.2" fill="#fff"/></svg>
<div class="a" style="left:314.00px;top:362.84px;font-size:14.72px;color:#1d1d1d;font-weight:400;">Afficher le logo de la société</div>
<div class="a" style="left:884.00px;top:362.84px;font-size:14.72px;color:#1d1d1d;font-weight:400;">Activez cette option pour masquer le logo de la société dans les pages d'interface publique</div>
<svg class="a" style="left:1676px;top:358px;" width="33" height="22" viewBox="0 0 33 22"><rect x="1.7" y="1.7" width="29.6" height="18.6" rx="9.3" fill="none" stroke="#9b9b9b" stroke-width="3.4"/><circle cx="11" cy="11" r="9.3" fill="none" stroke="#9b9b9b" stroke-width="3.4"/></svg>
<div class="a" style="left:314.00px;top:407.84px;font-size:14.72px;color:#1d1d1d;font-weight:400;">Code graphique (CAPTCHA)</div>
<div class="a" style="left:884.00px;top:407.84px;font-size:14.72px;color:#1d1d1d;font-weight:400;">Utilisation du code graphique (CAPTCHA) sur les pages d'interface publique</div>
<svg class="a" style="left:1676px;top:403px;" width="33" height="22" viewBox="0 0 33 22"><rect x="1.7" y="1.7" width="29.6" height="18.6" rx="9.3" fill="none" stroke="#9b9b9b" stroke-width="3.4"/><circle cx="11" cy="11" r="9.3" fill="none" stroke="#9b9b9b" stroke-width="3.4"/></svg>
<div class="a" style="left:314.00px;top:452.84px;font-size:14.72px;color:#1d1d1d;font-weight:400;">Utilisation de tous les modes de configuration des emails</div>
<div class="a" style="left:884.00px;top:452.84px;font-size:14.72px;color:#1d1d1d;font-weight:400;">Autorise l'utilisation de tous les modes de configuration des emails par défaut, seul le mode SMTP est autorisé</div>
<svg class="a" style="left:1676px;top:448px;" width="33" height="22" viewBox="0 0 33 22"><rect x="0" y="0" width="33" height="22" rx="11" fill="#27a67f"/><circle cx="22" cy="11" r="7.2" fill="#fff"/></svg>
<div class="a" style="left:314.00px;top:497.84px;font-size:14.72px;color:#1d1d1d;font-weight:400;">Génération document lors de l'archive</div>
<div class="a" style="left:884.00px;top:497.84px;font-size:14.72px;color:#1d1d1d;font-weight:400;">Création automatique du document lors de l'archivage</div>
<svg class="a" style="left:1676px;top:493px;" width="33" height="22" viewBox="0 0 33 22"><rect x="0" y="0" width="33" height="22" rx="11" fill="#27a67f"/><circle cx="22" cy="11" r="7.2" fill="#fff"/></svg>
<div class="a" style="left:314.00px;top:542.84px;font-size:14.72px;color:#1d1d1d;font-weight:400;">Gestion de l'ajout des participants sur le status Validé (en attente de signature)</div>
<div class="a" style="left:884.00px;top:542.84px;font-size:14.72px;color:#1d1d1d;font-weight:400;">Activez cette option pour ajouter des participants sur le status Validé (en attente de signature)</div>
<svg class="a" style="left:1676px;top:538px;" width="33" height="22" viewBox="0 0 33 22"><rect x="1.7" y="1.7" width="29.6" height="18.6" rx="9.3" fill="none" stroke="#9b9b9b" stroke-width="3.4"/><circle cx="11" cy="11" r="9.3" fill="none" stroke="#9b9b9b" stroke-width="3.4"/></svg>
<div class="a" style="left:314.00px;top:638.04px;font-size:14.72px;color:#1d1d1d;font-weight:400;">Utilisation chargement rapide d'image amélioré</div>
<div class="a" style="left:884.00px;top:581.64px;font-size:14.72px;color:#1d1d1d;font-weight:400;">Activez cette option pour améliorer le chargement rapide d'image</div>
<div class="a" style="left:884.00px;top:602.54px;font-size:14.72px;color:#1d1d1d;font-weight:400;">Option disponible :</div>
<div class="a" style="left:909px;top:644px;width:4px;height:4px;background:#1d1d1d;border-radius:50%"></div>
<div class="a" style="left:924.00px;top:637.64px;font-size:14.72px;color:#1d1d1d;font-weight:400;">Rotation d'image</div>
<div class="a" style="left:909px;top:664px;width:4px;height:4px;background:#1d1d1d;border-radius:50%"></div>
<div class="a" style="left:924.00px;top:658.04px;font-size:14.72px;color:#1d1d1d;font-weight:400;">Dessin sur l'image</div>
<div class="a" style="left:909px;top:685px;width:4px;height:4px;background:#1d1d1d;border-radius:50%"></div>
<div class="a" style="left:924.00px;top:678.44px;font-size:14.72px;color:#1d1d1d;font-weight:400;">Enregistrement de l'image sur un format réduit</div>
<svg class="a" style="left:1676px;top:633px;" width="33" height="22" viewBox="0 0 33 22"><rect x="1.7" y="1.7" width="29.6" height="18.6" rx="9.3" fill="none" stroke="#9b9b9b" stroke-width="3.4"/><circle cx="11" cy="11" r="9.3" fill="none" stroke="#9b9b9b" stroke-width="3.4"/></svg>
<div class="a" style="left:314.00px;top:738.04px;font-size:14.72px;color:#1d1d1d;font-weight:400;">Afficher toutes les informations des médias</div>
<div class="a" style="left:884.00px;top:726.24px;font-size:14.72px;color:#1d1d1d;font-weight:400;">Activez cette option pour afficher toutes les informations des médias.</div>
<div class="a" style="left:884.00px;top:747.04px;font-size:14.72px;color:#1d1d1d;font-weight:400;">Cela peut ralentir le chargement de la page.</div>
<svg class="a" style="left:1676px;top:733px;" width="33" height="22" viewBox="0 0 33 22"><rect x="1.7" y="1.7" width="29.6" height="18.6" rx="9.3" fill="none" stroke="#9b9b9b" stroke-width="3.4"/><circle cx="11" cy="11" r="9.3" fill="none" stroke="#9b9b9b" stroke-width="3.4"/></svg>
<div class="a" style="left:302.50px;top:808.03px;font-size:16.15px;color:#2a8d98;font-weight:400;">Configuration des médias</div>
<div class="a" style="left:301px;top:849px;width:1419px;height:359px;border:1px solid #d6d6d6;border-radius:6px;overflow:hidden;background:#fff">
<div style="position:absolute;left:0;top:0;width:1419px;height:44px;background:#f0f0f0"></div>
<div style="position:absolute;left:0;top:44px;width:1419px;height:45px;background:#fff;border-top:1px solid #ececec;box-sizing:border-box"></div>
<div style="position:absolute;left:0;top:89px;width:1419px;height:45px;background:#fff;border-top:1px solid #ececec;box-sizing:border-box"></div>
<div style="position:absolute;left:0;top:134px;width:1419px;height:45px;background:#fff;border-top:1px solid #ececec;box-sizing:border-box"></div>
<div style="position:absolute;left:0;top:179px;width:1419px;height:45px;background:#fff;border-top:1px solid #ececec;box-sizing:border-box"></div>
<div style="position:absolute;left:0;top:224px;width:1419px;height:45px;background:#fff;border-top:1px solid #ececec;box-sizing:border-box"></div>
<div style="position:absolute;left:0;top:269px;width:1419px;height:45px;background:#fff;border-top:1px solid #ececec;box-sizing:border-box"></div>
<div style="position:absolute;left:0;top:314px;width:1419px;height:45px;background:#fff;border-top:1px solid #ececec;box-sizing:border-box"></div>
</div>
<div class="a" style="left:314.00px;top:863.74px;font-size:14.72px;color:#383850;font-weight:400;">Nom</div>
<div class="a" style="left:841.50px;top:863.74px;font-size:14.72px;color:#383850;font-weight:400;">Description</div>
<div class="a" style="left:1461.50px;top:863.74px;font-size:14.72px;color:#383850;font-weight:400;">Valeur</div>
<div class="a" style="left:314.00px;top:909.84px;font-size:14.72px;color:#1d1d1d;font-weight:400;">Largeur du média mini</div>
<div class="a" style="left:841.50px;top:909.84px;font-size:14.72px;color:#1d1d1d;font-weight:400;">Largeur du média (dimension mini) avec pour ratio 16:9</div>
<div class="a" style="left:1466.50px;top:908.84px;font-size:14.72px;color:#111;font-weight:400;">128</div>
<div class="a" style="left:1462px;top:930px;width:188px;height:1px;background:#dcdcdc;border-radius:1px"></div>
<div class="a" style="left:314.00px;top:954.84px;font-size:14.72px;color:#1d1d1d;font-weight:400;">Hauteur du média mini</div>
<div class="a" style="left:841.50px;top:954.84px;font-size:14.72px;color:#1d1d1d;font-weight:400;">Hauteur du média (dimension mini) avec pour ratio 16:9</div>
<div class="a" style="left:1466.50px;top:953.84px;font-size:14.72px;color:#111;font-weight:400;">72</div>
<div class="a" style="left:1462px;top:975px;width:188px;height:1px;background:#dcdcdc;border-radius:1px"></div>
<div class="a" style="left:314.00px;top:999.84px;font-size:14.72px;color:#1d1d1d;font-weight:400;">Largeur du média small</div>
<div class="a" style="left:841.50px;top:999.84px;font-size:14.72px;color:#1d1d1d;font-weight:400;">Largeur du média (dimension small) avec pour ratio 16:9</div>
<div class="a" style="left:1466.50px;top:998.84px;font-size:14.72px;color:#111;font-weight:400;">480</div>
<div class="a" style="left:1462px;top:1020px;width:188px;height:1px;background:#dcdcdc;border-radius:1px"></div>
<div class="a" style="left:314.00px;top:1044.84px;font-size:14.72px;color:#1d1d1d;font-weight:400;">Hauteur du média small</div>
<div class="a" style="left:841.50px;top:1044.84px;font-size:14.72px;color:#1d1d1d;font-weight:400;">Hauteur du média (dimension small) avec pour ratio 16:9</div>
<div class="a" style="left:1466.50px;top:1043.84px;font-size:14.72px;color:#111;font-weight:400;">270</div>
<div class="a" style="left:1462px;top:1065px;width:188px;height:1px;background:#dcdcdc;border-radius:1px"></div>
<div class="a" style="left:314.00px;top:1089.84px;font-size:14.72px;color:#1d1d1d;font-weight:400;">Largeur du média medium</div>
<div class="a" style="left:841.50px;top:1089.84px;font-size:14.72px;color:#1d1d1d;font-weight:400;">Largeur du média (dimension medium) avec pour ratio 16:9</div>
<div class="a" style="left:1466.50px;top:1088.84px;font-size:14.72px;color:#111;font-weight:400;">854</div>
<div class="a" style="left:1462px;top:1110px;width:188px;height:1px;background:#dcdcdc;border-radius:1px"></div>
<div class="a" style="left:314.00px;top:1134.84px;font-size:14.72px;color:#1d1d1d;font-weight:400;">Hauteur du média medium</div>
<div class="a" style="left:841.50px;top:1134.84px;font-size:14.72px;color:#1d1d1d;font-weight:400;">Hauteur du média (dimension medium) avec pour ratio 16:9</div>
<div class="a" style="left:1466.50px;top:1133.84px;font-size:14.72px;color:#111;font-weight:400;">480</div>
<div class="a" style="left:1462px;top:1155px;width:188px;height:1px;background:#dcdcdc;border-radius:1px"></div>
<div class="a" style="left:314.00px;top:1179.84px;font-size:14.72px;color:#1d1d1d;font-weight:400;">Largeur du média large</div>
<div class="a" style="left:841.50px;top:1179.84px;font-size:14.72px;color:#1d1d1d;font-weight:400;">Largeur du média (dimension large) avec pour ratio 16:9</div>
<div class="a" style="left:1466.50px;top:1178.84px;font-size:14.72px;color:#111;font-weight:400;">1280</div>
<div class="a" style="left:1462px;top:1200px;width:188px;height:1px;background:#dcdcdc;border-radius:1px"></div>
</body></html>
